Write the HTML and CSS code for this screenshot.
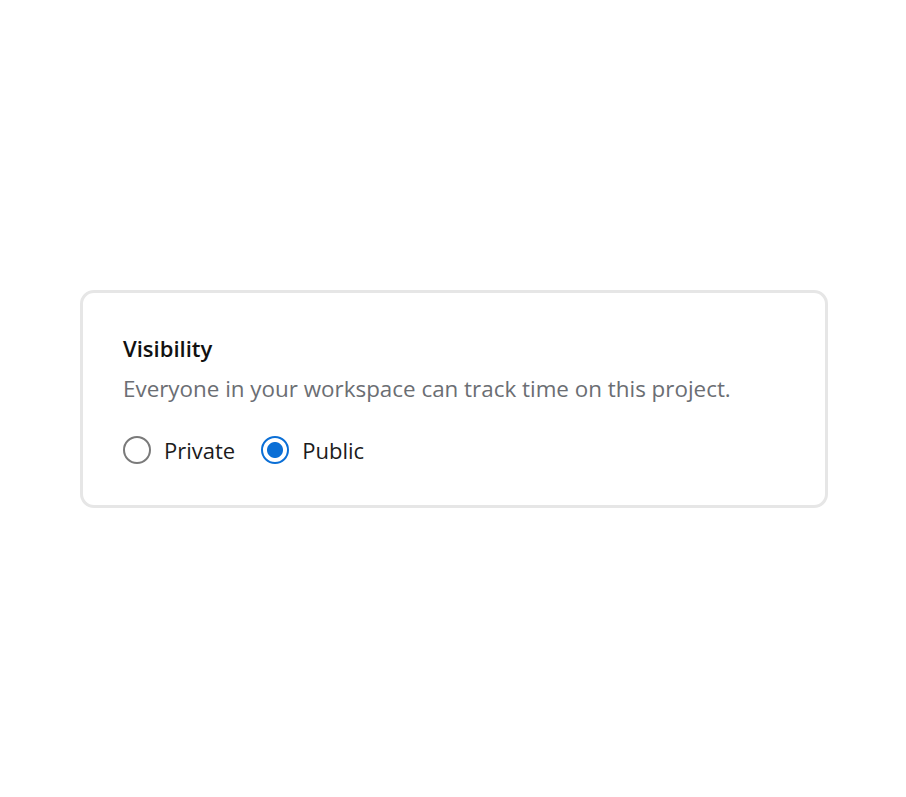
FILE: index.html
```html
<!DOCTYPE html>
<html>
<head>
<meta charset="utf-8">
<link rel="stylesheet" href="styles.css">
</head>
<body>
<main class="page">
  <section class="card">
    <h2 class="title">Visibility</h2>
    <p class="desc">Everyone in your workspace can track time on this project.</p>
    <div class="options">
      <label class="option">
        <span class="radio"></span>
        <span class="label">Private</span>
      </label>
      <label class="option">
        <span class="radio checked"></span>
        <span class="label">Public</span>
      </label>
    </div>
  </section>
</main>
</body>
</html>
```
FILE: styles.css
```css
html, body {
  margin: 0;
  padding: 0;
  background: #ffffff;
}
body {
  font-family: "Open Sans", "Noto Sans", "Liberation Sans", sans-serif;
  width: 906px;
  height: 797px;
}
.page {
  padding-top: 290px;
  padding-left: 80px;
}
.card {
  box-sizing: border-box;
  width: 748px;
  height: 218px;
  border: 3px solid #e6e6e6;
  border-radius: 14px;
  padding: 40px 40px 0 40px;
  background: #fff;
}
.title {
  margin: 0;
  font-size: 22px;
  font-weight: 600;
  color: #111111;
  line-height: 30px;
}
.desc {
  margin: 11px 0 0;
  font-size: 22.4px;
  color: #6b6e73;
  line-height: 30px;
}
.options {
  display: flex;
  gap: 26px;
  margin-top: 31px;
}
.option {
  display: flex;
  align-items: center;
  gap: 13px;
}
.radio {
  box-sizing: border-box;
  width: 28px;
  height: 28px;
  border-radius: 50%;
  border: 2px solid #7a7a7a;
  display: inline-block;
}
.radio.checked {
  border-color: #0b6fd6;
  border-width: 2px;
  background: radial-gradient(circle, #0b6fd6 0 7.5px, #fff 8.5px);
}
.label {
  font-size: 22px;
  color: #1b1b1b;
  line-height: 30px;
}
```
